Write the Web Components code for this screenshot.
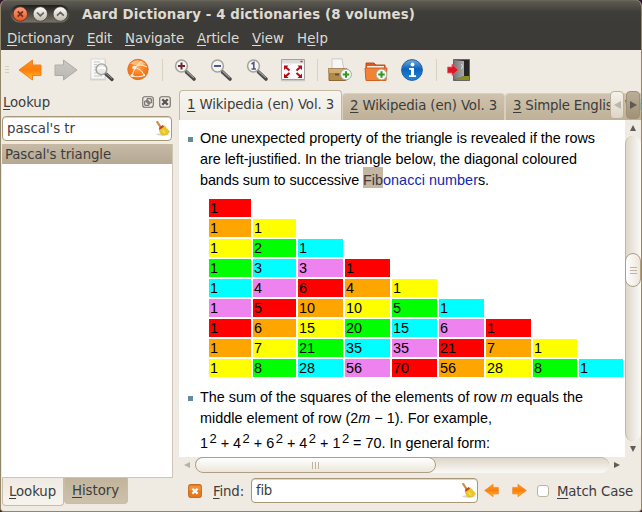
<!DOCTYPE html>
<html lang="en"><head><meta charset="utf-8"><title>Aard Dictionary</title>
<style>
html,body{margin:0;width:642px;height:512px;overflow:hidden;background:#35152a}
</style></head><body><app-window></app-window>
<script>
const define=(name,html,after)=>customElements.define(name,class extends HTMLElement{
  connectedCallback(){
    if(this.shadowRoot)return;
    this.attachShadow({mode:'open'}).innerHTML=typeof html==='function'?html(this):html;
    if(after)after(this);
  }
});

define('app-window',`<style>
:host{display:flex;flex-direction:column;width:642px;height:512px;box-sizing:border-box;background:#efebe3;border:solid #94866b;border-width:0 1px 1px;border-radius:6px 6px 4px 4px;overflow:hidden;font:13.33px "DejaVu Sans",sans-serif;color:#3c3c3c}
main{display:grid;grid-template-columns:172px 462px;column-gap:6px;height:421px;position:relative}
</style><title-bar></title-bar><menu-bar></menu-bar><tool-bar></tool-bar>
<main><lookup-panel></lookup-panel><article-panel></article-panel></main>`);

define('title-bar',`<style>
:host{display:flex;align-items:center;height:25px;padding:2px 0 0 9px;box-sizing:border-box;background:linear-gradient(#756f5f 0,#5d5b53 1px,#3e3d39 12px,#3c3b37);border:0;color:#dfdbd2;font-weight:bold;font-size:13.33px}
svg{margin-right:12px;margin-top:-1px}
fit-text{line-height:20px;margin-top:2px}
</style><svg width="60" height="20" viewBox="0 0 60 20"><defs>
<linearGradient id="p" x2="0" y2="1"><stop stop-color="#1f1e1b"/><stop offset="1" stop-color="#777468"/></linearGradient>
<linearGradient id="r" x2="0" y2="1"><stop stop-color="#f9a185"/><stop offset="1" stop-color="#e95420"/></linearGradient>
<linearGradient id="w" x2="0" y2="1"><stop stop-color="#fffefa"/><stop offset="1" stop-color="#bcb7ab"/></linearGradient></defs>
<rect x=".5" y="2" width="59" height="17.5" rx="8.7" fill="url(#p)"/>
<circle cx="10.3" cy="11" r="7.2" fill="url(#r)" stroke="#6d2a17" stroke-width=".8"/><circle cx="30.3" cy="11" r="7.2" fill="url(#w)" stroke="#35332e" stroke-width=".6"/><circle cx="50.3" cy="11" r="7.2" fill="url(#w)" stroke="#35332e" stroke-width=".6"/>
<g fill="none" stroke="#6a2c1c" stroke-width="1.7"><path d="M7.7 8.4l5.2 5.2M12.9 8.4l-5.2 5.2"/><path stroke="#62605a" d="M27 9.5l3.4 3.3 3.4-3.3M47 12.7l3.4-3.3 3.4 3.3"/></g></svg>
<fit-text w="333">Aard Dictionary - 4 dictionaries (8 volumes)</fit-text>`);

define('menu-bar',`<style>
:host{display:flex;gap:13px;height:25px;box-sizing:border-box;padding:3px 0 0 6px;background:#3c3b37;color:#dfdbd2;line-height:22px}
</style><fit-text w="67"><u>D</u>ictionary</fit-text><fit-text w="25"><u>E</u>dit</fit-text><fit-text w="59"><u>N</u>avigate</fit-text><fit-text w="42"><u>A</u>rticle</fit-text><fit-text w="32"><u>V</u>iew</fit-text><fit-text w="31">H<u>e</u>lp</fit-text>`);

const lens=g=>`<path d="M12.5 14l7.500 7" stroke="#4a4a4a" stroke-width="3.600" stroke-linecap="round"/><path d="M12.5 13.3l7.500 6.600" stroke="#a0a09c" stroke-width="1.2"/><circle cx="7.5" cy="8" r="5.9" fill="#f4f4f1" stroke="#a3a29c" stroke-width="1.5"/>${g}`;
const plus=(x,y)=>`<circle cx="${x}" cy="${y}" r="5.4" fill="#f4f6f1" stroke="#a2a99b"/><path d="M${x-3.2} ${y}h6.4M${x} ${y-3.2}v6.4" stroke="#319722" stroke-width="2"/>`;
const arrow='M1 12L14.5 2v5H23v10.500h-8.500V22z';
const icons={
back:`<defs><linearGradient id="g" x2="0" y2="1"><stop stop-color="#ff9420"/><stop offset=".5" stop-color="#ff7d0c"/><stop offset="1" stop-color="#ffc31a"/></linearGradient></defs><path d="${arrow}" fill="url(#g)" stroke="#ee8321" stroke-linejoin="round"/>`,
fwd:`<defs><linearGradient id="g" x2="0" y2="1"><stop stop-color="#cbc9c5"/><stop offset="1" stop-color="#bab7b3"/></linearGradient></defs><path transform="matrix(-1 0 0 1 24 0)" d="${arrow}" fill="url(#g)" stroke="#aeaba7" stroke-linejoin="round"/>`,
find:`<path d="M2 1.500h14v21H0z" fill="#d4d3cf"/><path d="M1 1h14v20H1z" fill="#f8f8f6" stroke="#cecdca" stroke-width=".7"/><path d="M4 4h6M4 6.500h3M4 9h2M4 12h2M4 15h3M4 18h8" stroke="#c5c6c5"/><path d="M16 16l6 5.400" stroke="#444" stroke-width="3.400" stroke-linecap="round"/><path d="M16 15.500l6 5" stroke="#999"/><circle cx="11.500" cy="11.300" r="5.400" fill="#e8e9e7" stroke="#a1a29f" stroke-width="1.400"/><path d="M7.800 11q4-3 7.500 0" stroke="#fff" stroke-width="2" fill="none"/>`,
ball:`<defs><radialGradient id="g" cy=".4"><stop stop-color="#ffa450"/><stop offset=".7" stop-color="#ff7a1c"/><stop offset="1" stop-color="#ee7416"/></radialGradient></defs><circle cx="12" cy="11.500" r="10.200" fill="url(#g)" stroke="#d5783a"/><path d="M4 5.500Q12-1 20 6Q13 9 4 5.500z" fill="#ffd3a6" opacity=".7"/><g fill="none" stroke="#ffe3c4" stroke-width="1.100"><path d="M6 18Q8 9 16 3M8 9.500Q15 10 18.500 18M8 9.500Q14 5 21 9M6 18q7 2 13-1"/></g><circle cx="8" cy="9.500" r="1.700" fill="#fff3df"/><circle cx="6" cy="17.500" r="1.500" fill="#fff3df"/><circle cx="18" cy="17" r="1.200" fill="#fff3df"/>`,
zin:lens('<path d="M4 8h7M7.500 4.500v7" stroke="#6d2831" stroke-width="2"/>'),
zout:lens('<path d="M4 8h7" stroke="#51558b" stroke-width="2"/>'),
zone:lens('<path d="M5.500 6l2.300-1.500V11M5.500 11h4.500" stroke="#555486" stroke-width="1.600" fill="none"/>'),
fit:`<path d="M0 22h24v1.300H0z" fill="#cac8c4"/><path d="M.5 1.500h23v20H.5z" fill="#fafafa" stroke="#a3a19e"/><path d="M1 2h22v3.500H1z" fill="#dddcdc"/><path d="M19.500 3.500h2" stroke="#c52232" stroke-width="1.500"/><path d="M3 7.500h4.500L3 12zM21 7.500h-4.500L21 12zM3 20h4.500L3 15.500zM21 20h-4.500l4.500-4.500z" fill="#b60918"/><path d="M4.500 9l4 3.500M19.500 9l-4 3.500M4.500 18.500l4-3.500M19.500 18.500l-4-3.500" stroke="#b60918" stroke-width="2"/>`,
add:`<path d="M4 .8h10l2 11H4z" fill="#f6f6f5" stroke="#cac9c6"/><path d="M1 11h17v11.500H1z" fill="#b48a4c" stroke="#8c6735"/><path d="M0 10.500h19l-1 5H1z" fill="#d0ad74" stroke="#9b7847" stroke-width=".7"/><path d="M7 15.500h4v2H7z" fill="#6e522d"/>${plus(18,16.500)}`,
folder:`<path d="M2 20V5h8l2 2h9v13z" fill="#d85d20" stroke="#bc4e20"/><path d="M3 8h17v2H3z" fill="#f9eee1"/><path d="M1 10h22l-1 12.500H2z" fill="#f18335" stroke="#d76020"/>${plus(17.500,16.500)}`,
info:`<defs><linearGradient id="g" x2="0" y2="1"><stop stop-color="#70acdf"/><stop offset=".45" stop-color="#0d63bd"/><stop offset="1" stop-color="#2386da"/></linearGradient></defs><circle cx="12" cy="12" r="10.400" fill="url(#g)" stroke="#235f9d"/><circle cx="12.500" cy="6.500" r="1.900" fill="#fff"/><path d="M9 10h5v7.200h2V19H9v-1.800h2v-5.400H9z" fill="#fff"/>`,
door:`<defs><linearGradient id="g" x2="1"><stop stop-color="#777"/><stop offset="1" stop-color="#ababab"/></linearGradient></defs><path d="M6.500 1.500h16v21h-16z" fill="#262626" stroke="#656565"/><path d="M7 22l10-4h5v4z" fill="#8b8d20"/><path d="M7 2l10 1v15L7 22z" fill="url(#g)"/><path d="M14.500 11q2-3 0-5" stroke="#ddd" fill="none"/><path d="M.5 9h4.500V6l6.300 6L5 17.500V15H.5z" fill="#dc1726" stroke="#ed6470" stroke-width=".8"/>`,
broom:`<ellipse cx="12" cy="21.500" rx="10" ry="2" fill="#bbb9b1" opacity=".6"/><path d="M3.500 1.500l6 9" stroke="#c98f45" stroke-width="3.400" stroke-linecap="round"/><path d="M6.500 13l8-6 9 10q-4 6-12 5.500-4-3-5-9.500z" fill="#ecc91f" stroke="#cfaa2a" stroke-width=".8"/><path d="M6 11l6-4.500 2.500 2.500-7 5z" fill="#c8402b"/><path d="M12 14l4 6" stroke="#fbe98a" stroke-width="1.600" fill="none"/>`,
shut:`<rect x="1" y="1" width="22" height="22" rx="3" fill="#e87a1e" stroke="#bb5c15" stroke-width="1.500"/><path d="M2 3h20v8H2z" fill="#f3a04b" opacity=".6"/><path d="M7.500 8l9 8.500M16.500 8l-9 8.500" stroke="#fff" stroke-width="3.600"/>`,
float:`<rect x="1.500" y="1.500" width="21" height="21" rx="4" fill="none" stroke="#6f6c67" stroke-width="2.200"/><path d="M10 5.500h8.500v8.500H10zM5.500 10H14v8.500H5.500z" fill="#efebe3" stroke="#5b5a57" stroke-width="2"/>`,
close:`<rect x="1.500" y="1.500" width="21" height="21" rx="4" fill="none" stroke="#6f6c67" stroke-width="2.200"/><path d="M6.500 6.500l11 11M17.500 6.500l-11 11" stroke="#555" stroke-width="4.600"/>`
};
icons.next=icons.back.replace('<path ','<path transform="matrix(-1 0 0 1 24 0)" ');
define('ui-icon',e=>{const s=e.getAttribute('size')||24;return `<style>:host{display:block;flex:none;width:${s}px;height:${s}px}svg{display:block}</style><svg width="${s}" height="${s}" viewBox="0 0 24 24">${icons[e.getAttribute('name')]}</svg>`});

define('tool-bar',`<style>
:host{display:flex;gap:12px;height:40px;align-items:center;box-sizing:border-box;padding-left:4px}
b{width:4px;height:8px;margin-right:-3px;background:repeating-linear-gradient(#d5cdbd 0 1px,transparent 1px 3px)}
i{width:1px;margin-right:-1px;height:22px;background:#d9d1c3}
.n{margin-left:-1px}
</style><b></b><ui-icon name="back"></ui-icon><ui-icon name="fwd"></ui-icon><ui-icon name="find"></ui-icon><ui-icon name="ball"></ui-icon><i></i><ui-icon name="zin"></ui-icon><ui-icon name="zout"></ui-icon><ui-icon name="zone"></ui-icon><ui-icon class="n" name="fit"></ui-icon><i></i><ui-icon class="n" name="add"></ui-icon><ui-icon name="folder"></ui-icon><ui-icon name="info"></ui-icon><i></i><ui-icon class="n" name="door"></ui-icon>`);

define('line-edit',`<style>
:host{display:flex;align-items:center;justify-content:space-between;box-sizing:border-box;height:25px;background:#fff;border:1px solid #a89877;border-radius:4px;padding:0 1px 1px 4px;box-shadow:inset 0 1px #ddd6ca;color:#3c3c3c}
</style><slot></slot><ui-icon name="broom" size="15"></ui-icon>`);

define('lookup-panel',`<style>
:host{display:flex;flex-direction:column;height:421px}
header{display:flex;height:26px;align-items:center;padding:0 2px 2px 2px;box-sizing:border-box}
header fit-text{margin-right:auto;line-height:24px;margin-top:2px}
header ui-icon{margin-left:5px}
line-edit{margin-left:1px;width:170px}
ul{list-style:none;margin:3px 0 0 1px;padding:0;height:334px;box-sizing:border-box;background:#fff;border:solid #cdc5b5;border-width:0 1px 1px 0;width:171px}
li{height:20px;line-height:21px;padding-left:3px;background:linear-gradient(#c6b9a6,#b6a993)}
nav{display:flex;align-items:flex-start;margin-left:1px}
nav span{box-sizing:border-box;border:1px solid #c9bda8;border-top:0;border-radius:0 0 4px 4px}
.a{height:28px;width:62px;padding-left:6px;background:linear-gradient(#efebe3,#f7f4ee);line-height:28px}
.b{height:26px;width:64px;padding-left:7px;background:linear-gradient(#c2b49c,#cdc1ab);line-height:25px}
</style><header><fit-text w="47"><u>L</u>ookup</fit-text><ui-icon name="float" size="12"></ui-icon><ui-icon name="close" size="12"></ui-icon></header>
<line-edit><fit-text w="68">pascal's tr</fit-text></line-edit>
<ul><li><fit-text w="106">Pascal's triangle</fit-text></li></ul>
<nav><span class="a"><fit-text w="47"><u>L</u>ookup</fit-text></span><span class="b"><fit-text w="47"><u>H</u>istory</fit-text></span></nav>`);

define('scroll-bar',e=>{
 const v=e.hasAttribute('vertical'),d=v?'column':'row';
 const a=v?['M3 0l3 6H0z','M0 0h6L3 6z']:['M6 0v6L0 3z','M0 0v6l6-3z'];
 const [s,p]=v?['height','width']:['width','height'];
 const ang=v?'90deg':'180deg';
 return `<style>:host{display:flex;flex-direction:${d};background:#efebe3}
 svg{display:block;margin:auto}.x{display:flex;${s}:16px;${p}:16px}
 .t{flex:1;box-sizing:border-box;background:linear-gradient(${ang},#ded6c9,#fbfaf7);border-radius:8px;border:0 solid #c2b7a3;border-${v?'left':'top'}-width:1px;display:flex;flex-direction:${d};padding-${v?'top':'left'}:${e.getAttribute('pos')}px}
 .k{box-sizing:border-box;${s}:${e.getAttribute('len')}px;border:1px solid #ad9e84;border-radius:8px;background:linear-gradient(${ang},#fff,#ece6dc);display:flex;${v?'margin-left:-1px;width:16px':'margin-top:-1px;height:16px'}}
 .k i{margin:auto;width:7px;height:7px;background:repeating-linear-gradient(${v?'180deg':'90deg'},#c0b49f 0 1px,transparent 1px 3px)}</style>
 <span class="x"><svg width="6" height="6"><path d="${a[0]}" fill="${v?'#5d5c59':'#b9b1a3'}"/></svg></span><div class="t"><span class="k"><i></i></span></div><span class="x"><svg width="6" height="6"><path d="${a[1]}" fill="#5d5c59"/></svg></span>`});

define('tab-strip',`<style>
:host{display:flex;align-items:flex-end;height:30px;overflow:hidden;position:relative}
span{box-sizing:border-box;height:27px;width:163px;flex:none;background:linear-gradient(#cfc3ae,#bfb197);border:1px solid #d8cfbf;border-bottom:0;border-radius:4px 4px 0 0;padding-left:7px;line-height:23px}
.a{height:30px;background:linear-gradient(#f7f5f0,#efebe3);border-color:#c7b99f;line-height:28px}
nav{position:absolute;right:1px;top:1px;display:flex;gap:2px}
nav b{width:14px;height:28px;box-sizing:border-box;border:1px solid #bdb09a;border-radius:4px;background:linear-gradient(#f5f2eb,#ddd5c7);display:flex}
nav b+b{background:linear-gradient(#bbad98,#a19177);border-color:#9f9077}svg{margin:auto}
</style><span class="a"><fit-text w="147"><u>1</u> Wikipedia (en) Vol. 3</fit-text></span><span><fit-text w="147"><u>2</u> Wikipedia (en) Vol. 3</fit-text></span><span><fit-text w="128"><u>3</u> Simple English Wi</fit-text></span>
<nav><b><svg width="7" height="8"><path d="M7 0v8L0 4z" fill="#bdb5a8"/></svg></b><b><svg width="7" height="8"><path d="M0 0v8l7-4z" fill="#5d5b56"/></svg></b></nav>`);

define('pascal-table',()=>{
 const colors=['red','orange','yellow','lime','cyan','violet'];
 let s='',row=[1];
 for(let r=0;r<9;r++){row.forEach((n,c)=>s+=`<span style="grid-row:${r+1};grid-column:${c+1};background:${colors[(r+c)%6]}">${n}</span>`);row=[1,...row.slice(1).map((n,i)=>n+row[i]),1]}
 return `<style>:host{display:grid;grid-template-columns:42px 43px 45px 45px 45px 45px 45px 44px 44px;grid-auto-rows:18px;gap:2px;font-size:14.4px}span{padding-left:1px;line-height:19px;height:18px;box-sizing:border-box}</style>${s}`});

define('article-view',`<style>
:host{display:block;background:#fff;color:#000;font:14.4px/21px "Liberation Sans",Arial,sans-serif;overflow:hidden;height:337px;padding:8px 0 0 21px;box-sizing:border-box}
section{position:relative}
section::before{content:"";position:absolute;left:-12px;top:9px;width:5px;height:5px;background:#638b9c}
div{height:21px;display:flex;white-space:nowrap}
pascal-table{margin:8px 0 10px 9px}
.link{color:#1228b0}mark{display:block;height:21px;margin-top:-3px;background:#c3b6a4;color:#3c3c3c;line-height:27px}
.sq{margin-top:4px}
sup{font-size:13px;vertical-align:5px;line-height:0;margin-left:1.5px}
</style><section><div><fit-text w="395">One unexpected property of the triangle is revealed if the rows</fit-text></div>
<div><fit-text w="377">are left-justified. In the triangle below, the diagonal coloured</fit-text></div>
<div><fit-text w="163">bands sum to successive&nbsp;</fit-text><mark><fit-text w="20">Fib</fit-text></mark><fit-text class="link" w="95">onacci number</fit-text><fit-text w="11">s.</fit-text></div></section>
<pascal-table></pascal-table>
<section><div><fit-text w="383">The sum of the squares of the elements of row <i>m</i> equals the</fit-text></div>
<div><fit-text w="292">middle element of row (2<i>m</i> − 1). For example,</fit-text></div>
<div class="sq"><fit-text w="290">1<sup>2</sup> + 4<sup>2</sup> + 6<sup>2</sup> + 4<sup>2</sup> + 1<sup>2</sup> = 70. In general form:</fit-text></div></section>`);

define('find-bar',`<style>
:host{display:flex;align-items:center;height:36px;padding:0 0 1px 9px;box-sizing:border-box}
.l{margin:0 7px 0 11px}line-edit{width:227px}
.p{margin-left:6px}.n{margin-left:13px;margin-right:10px}
i{width:12px;height:12px;box-sizing:border-box;border:1px solid #bfb49f;border-radius:3px;background:#fff;margin-right:8px}
.l,.m{line-height:25px;margin-top:1px}
</style><ui-icon name="shut" size="14"></ui-icon><fit-text class="l" w="31"><u>F</u>ind:</fit-text><line-edit><fit-text w="16">fib</fit-text></line-edit><ui-icon class="p" name="back" size="15"></ui-icon><ui-icon class="n" name="next" size="15"></ui-icon><i></i><fit-text class="m" w="76"><u>M</u>atch Case</fit-text>`);

define('article-panel',`<style>
:host{display:flex;flex-direction:column}
.v{display:flex;height:337px}article-view{width:446px}
.v scroll-bar{width:16px;height:337px}.h{height:16px;width:446px}
</style><tab-strip></tab-strip><div class="v"><article-view></article-view><scroll-bar vertical pos="117" len="34"></scroll-bar></div><scroll-bar class="h" pos="0" len="241"></scroll-bar><find-bar></find-bar>`);

// A single text run whose tracking is adjusted to fill the width given in "w".
define('fit-text',`<style>:host{display:inline-block;white-space:nowrap;flex:none}::slotted(u){text-decoration-thickness:1px;text-underline-offset:2px}</style><slot></slot>`,e=>{
 const w=+e.getAttribute('w'),natural=e.getBoundingClientRect().width;
 e.style.letterSpacing=(w-natural)/e.textContent.length+'px';
 e.style.width=w+'px';
});
</script></body></html>
